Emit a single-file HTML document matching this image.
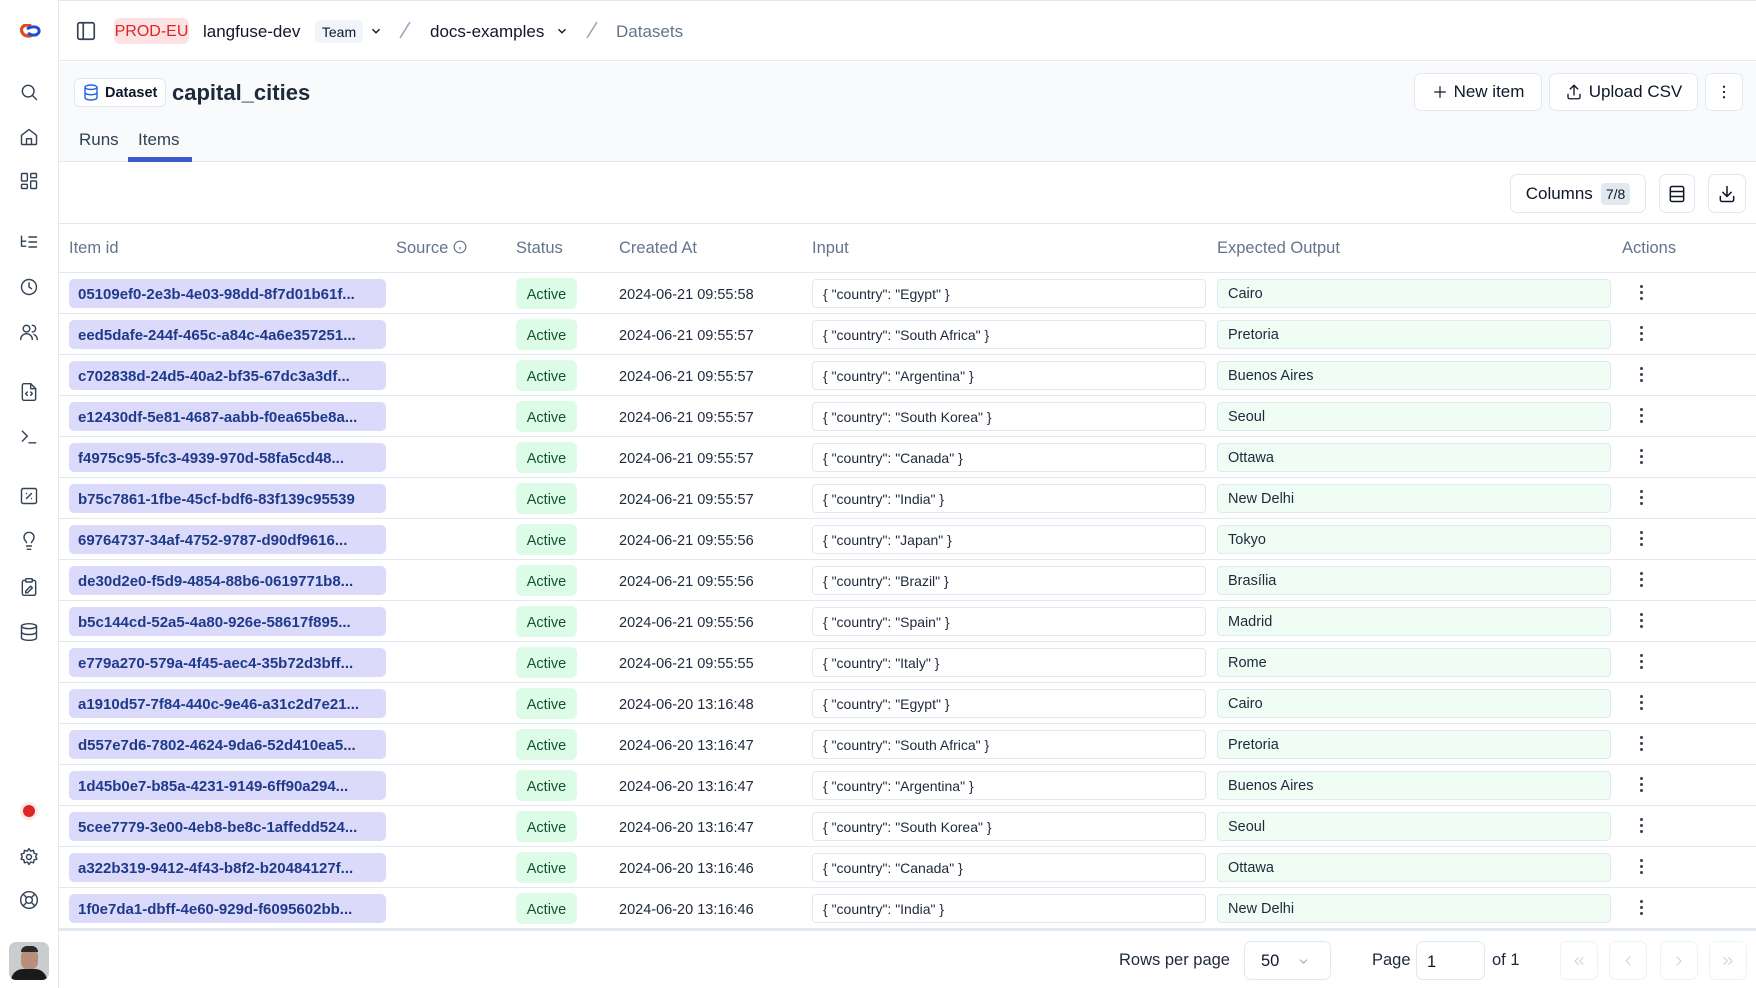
<!DOCTYPE html>
<html><head><meta charset="utf-8"><style>
*{box-sizing:border-box;margin:0;padding:0}
body{width:1756px;height:988px;overflow:hidden;background:#fff;font-family:"Liberation Sans",Arial,sans-serif;color:#0f172a;position:relative}
.a{position:absolute}
.side{left:0;top:0;width:59px;height:988px;border-right:1px solid #e2e8f0;background:#fff}
.ic{position:absolute;left:19px;width:20px;height:20px}
.ic svg{width:20px;height:20px;fill:none;stroke:#334155;stroke-width:1.7;stroke-linecap:round;stroke-linejoin:round}
.btn{position:absolute;border:1px solid #e2e8f0;border-radius:7px;background:#fff;display:flex;align-items:center;justify-content:center;font-size:17px;color:#0f172a}
.btn svg{fill:none;stroke:#0f172a;stroke-width:1.8;stroke-linecap:round;stroke-linejoin:round}
.th{position:absolute;top:239px;font-size:16.5px;color:#64748b}
.row{position:absolute;left:59px;width:1697px;height:41px;border-bottom:1px solid #e2e8f0}
.id{position:absolute;left:10px;top:6px;width:317px;height:29px;background:#dcdafa;border-radius:5px;color:#1e3a8a;font-size:15px;font-weight:bold;line-height:31px;padding-left:9px;white-space:nowrap;overflow:hidden}
.st{position:absolute;left:457px;top:5px;width:61px;height:31px;background:#dcfce7;border-radius:6px;color:#14532d;font-size:14.5px;text-align:center;line-height:34px}
.dt{position:absolute;left:560px;top:2px;line-height:41px;font-size:14.5px;color:#1e293b}
.in{position:absolute;left:753px;top:6px;width:394px;height:29px;border:1px solid #e2e8f0;border-radius:4px;font-size:14px;line-height:28px;padding-left:10px;color:#1e293b}
.out{position:absolute;left:1158px;top:6px;width:394px;height:29px;border:1px solid #e2e8f0;border-radius:4px;background:#f0fdf4;font-size:14.5px;line-height:28px;padding-left:10px;color:#1e293b}
.dots{position:absolute;left:1581px;top:12px;width:4px}
.dots i{display:block;width:3px;height:3px;background:#334155;border-radius:50%;margin-bottom:3px}
</style></head><body>
<div class="a side"></div>
<div class="a" style="left:19px;top:24px;width:22px;height:14px">
<svg width="22" height="14" viewBox="0 0 22 14"><path d="M12 2 C5 -1 1 4 3 8 C5 13 12 13 14 10" stroke="#e0481d" stroke-width="3.2" fill="none"/><path d="M8 5 C12 2 19 2 20 6 C21 11 14 13 9 9" stroke="#1d4ed8" stroke-width="3" fill="none"/></svg></div>
<div class="ic" style="top:82px"><svg viewBox="0 0 24 24"><circle cx="11" cy="11" r="7"/><path d="M21 21l-5-5"/></svg></div>
<div class="ic" style="top:127px"><svg viewBox="0 0 24 24"><path d="M3 10l9-7 9 7v10a1 1 0 0 1-1 1H4a1 1 0 0 1-1-1z"/><path d="M9 21v-7h6v7"/></svg></div>
<div class="ic" style="top:171px"><svg viewBox="0 0 24 24"><rect x="3" y="3" width="7" height="9" rx="1"/><rect x="14" y="3" width="7" height="5" rx="1"/><rect x="14" y="12" width="7" height="9" rx="1"/><rect x="3" y="16" width="7" height="5" rx="1"/></svg></div>
<div class="ic" style="top:232px"><svg viewBox="0 0 24 24"><path d="M3 5v12h5M3 11h5M12 6h9M12 12h9M12 18h9"/></svg></div>
<div class="ic" style="top:277px"><svg viewBox="0 0 24 24"><circle cx="12" cy="12" r="9"/><path d="M12 7v5l3 2"/></svg></div>
<div class="ic" style="top:322px"><svg viewBox="0 0 24 24"><circle cx="9" cy="8" r="4"/><path d="M2 21a7 7 0 0 1 14 0M16 4a4 4 0 0 1 0 8M22 21a7 7 0 0 0-4-6"/></svg></div>
<div class="ic" style="top:382px"><svg viewBox="0 0 24 24"><path d="M14 2H6a2 2 0 0 0-2 2v16a2 2 0 0 0 2 2h12a2 2 0 0 0 2-2V8z"/><path d="M14 2v6h6M10 12l-2 2 2 2M14 12l2 2-2 2"/></svg></div>
<div class="ic" style="top:427px"><svg viewBox="0 0 24 24"><path d="M4 17l6-6-6-6M12 19h8"/></svg></div>
<div class="ic" style="top:486px"><svg viewBox="0 0 24 24"><rect x="3" y="3" width="18" height="18" rx="2"/><path d="M15 9l-6 6M9 9h.01M15 15h.01"/></svg></div>
<div class="ic" style="top:531px"><svg viewBox="0 0 24 24"><path d="M15 14c.2-1 .7-1.7 1.5-2.5A6 6 0 1 0 7.5 11.5c.8.8 1.3 1.5 1.5 2.5M9 18h6M10 22h4"/></svg></div>
<div class="ic" style="top:577px"><svg viewBox="0 0 24 24"><rect x="8" y="2" width="8" height="4" rx="1"/><path d="M16 4h2a2 2 0 0 1 2 2v14a2 2 0 0 1-2 2H6a2 2 0 0 1-2-2V6a2 2 0 0 1 2-2h2M8 17l6-6 2 2-6 6H8z"/></svg></div>
<div class="ic" style="top:622px"><svg viewBox="0 0 24 24"><ellipse cx="12" cy="5" rx="9" ry="3"/><path d="M3 5v14c0 1.7 4 3 9 3s9-1.3 9-3V5M3 12c0 1.7 4 3 9 3s9-1.3 9-3"/></svg></div>
<div class="a" style="left:23px;top:805px;width:12px;height:12px;border-radius:50%;background:#dc2626;box-shadow:0 0 0 3px #fde8e8"></div>
<div class="ic" style="top:847px"><svg viewBox="0 0 24 24"><circle cx="12" cy="12" r="3"/><path d="M12 2l2 3 3.5-1 .5 3.5 3.5 1-1.5 3 1.5 3-3.5 1-.5 3.5-3.5-1-2 3-2-3-3.5 1-.5-3.5-3.5-1 1.5-3-1.5-3 3.5-1 .5-3.5 3.5 1z"/></svg></div>
<div class="ic" style="top:890px"><svg viewBox="0 0 24 24"><circle cx="12" cy="12" r="10"/><circle cx="12" cy="12" r="4"/><path d="M5 5l4 4M15 15l4 4M19 5l-4 4M9 15l-4 4"/></svg></div>
<div class="a" style="left:9px;top:942px;width:40px;height:38px;border-radius:7px;overflow:hidden;background:#c9cdd0">
<div class="a" style="left:12px;top:6px;width:17px;height:22px;border-radius:8px;background:#b88f7a"></div>
<div class="a" style="left:12px;top:4px;width:17px;height:6px;border-radius:6px 6px 0 0;background:#2a2a2a"></div>
<div class="a" style="left:2px;top:27px;width:36px;height:14px;border-radius:12px 12px 0 0;background:#1a1a1a"></div></div>

<div class="a" style="left:59px;top:0;width:1697px;height:61px;border-bottom:1px solid #e2e8f0;border-top:1px solid #e5e7eb"></div>
<div class="a" style="left:75px;top:20px"><svg width="22" height="22" viewBox="0 0 24 24" fill="none" stroke="#334155" stroke-width="1.8"><rect x="3" y="3" width="18" height="18" rx="2"/><path d="M9 3v18"/></svg></div>
<div class="a" style="left:114px;top:18px;width:75px;height:26px;background:#fde2e4;border-radius:6px;color:#dc2626;font-size:16px;line-height:28px;text-align:center">PROD-EU</div>
<div class="a" style="left:203px;top:22px;font-size:17px">langfuse-dev</div>
<div class="a" style="left:315px;top:20px;width:48px;height:23px;background:#f1f5f9;border-radius:5px;font-size:14px;line-height:25px;text-align:center">Team</div>
<div class="a" style="left:369px;top:24px"><svg width="14" height="14" viewBox="0 0 24 24" fill="none" stroke="#0f172a" stroke-width="2.4"><path d="M6 9l6 6 6-6"/></svg></div>
<div class="a" style="left:398px;top:20px"><svg width="14" height="20" viewBox="0 0 14 20"><path d="M12 2L2 18" stroke="#94a3b8" stroke-width="1.5"/></svg></div>
<div class="a" style="left:430px;top:22px;font-size:17px">docs-examples</div>
<div class="a" style="left:555px;top:24px"><svg width="14" height="14" viewBox="0 0 24 24" fill="none" stroke="#0f172a" stroke-width="2.4"><path d="M6 9l6 6 6-6"/></svg></div>
<div class="a" style="left:585px;top:20px"><svg width="14" height="20" viewBox="0 0 14 20"><path d="M12 2L2 18" stroke="#94a3b8" stroke-width="1.5"/></svg></div>
<div class="a" style="left:616px;top:22px;font-size:17px;color:#64748b">Datasets</div>

<div class="a" style="left:59px;top:62px;width:1697px;height:100px;background:#f8fafc;border-bottom:1px solid #e2e8f0"></div>
<div class="a" style="left:74px;top:78px;width:92px;height:29px;border:1px solid #e2e8f0;border-radius:6px;background:#fff"></div>
<div class="a" style="left:82px;top:83px"><svg width="18" height="19" viewBox="0 0 24 24" fill="none" stroke="#2563eb" stroke-width="1.9"><ellipse cx="12" cy="5" rx="8" ry="3"/><path d="M4 5v14c0 1.7 3.6 3 8 3s8-1.3 8-3V5M4 12c0 1.7 3.6 3 8 3s8-1.3 8-3"/></svg></div>
<div class="a" style="left:105px;top:85px;font-size:14.5px;font-weight:bold">Dataset</div>
<div class="a" style="left:172px;top:80px;font-size:22px;font-weight:bold;color:#1e293b">capital_cities</div>
<div class="a" style="left:79px;top:130px;font-size:17px;color:#334155">Runs</div>
<div class="a" style="left:138px;top:130px;font-size:17px;color:#334155">Items</div>
<div class="a" style="left:128px;top:157px;width:64px;height:5px;background:#3b5bcd"></div>
<div class="btn" style="left:1414px;top:73px;width:128px;height:38px"><svg width="16" height="16" viewBox="0 0 24 24" style="margin-right:6px"><path d="M12 4v16M4 12h16"/></svg>New item</div>
<div class="btn" style="left:1549px;top:73px;width:149px;height:38px"><svg width="18" height="18" viewBox="0 0 24 24" style="margin-right:6px"><path d="M4 15v4a2 2 0 0 0 2 2h12a2 2 0 0 0 2-2v-4M12 3v13M7 8l5-5 5 5"/></svg>Upload CSV</div>
<div class="btn" style="left:1705px;top:73px;width:38px;height:38px"><svg width="18" height="18" viewBox="0 0 24 24" style="stroke-width:3"><path d="M12 5h.01M12 12h.01M12 19h.01"/></svg></div>

<div class="btn" style="left:1510px;top:174px;width:136px;height:39px">Columns<span style="margin-left:8px;background:#e2e8f0;border-radius:4px;font-size:14px;padding:3px 5px">7/8</span></div>
<div class="btn" style="left:1659px;top:174px;width:36px;height:39px"><svg width="20" height="20" viewBox="0 0 24 24"><rect x="4" y="3" width="16" height="18" rx="2"/><path d="M4 9h16M4 15h16"/></svg></div>
<div class="btn" style="left:1708px;top:174px;width:38px;height:39px"><svg width="20" height="20" viewBox="0 0 24 24"><path d="M4 15v4a2 2 0 0 0 2 2h12a2 2 0 0 0 2-2v-4M12 3v12M7 10l5 5 5-5"/></svg></div>

<div class="a" style="left:59px;top:223px;width:1697px;height:50px;border-top:1px solid #e2e8f0;border-bottom:1px solid #e2e8f0"></div>
<div class="th" style="left:69px">Item id</div>
<div class="th" style="left:396px">Source <svg width="14" height="14" viewBox="0 0 24 24" fill="none" stroke="#64748b" stroke-width="2" style="vertical-align:-1px"><circle cx="12" cy="12" r="10"/><path d="M12 16v-4M12 8h.01"/></svg></div>
<div class="th" style="left:516px">Status</div>
<div class="th" style="left:619px">Created At</div>
<div class="th" style="left:812px">Input</div>
<div class="th" style="left:1217px">Expected Output</div>
<div class="th" style="left:1622px">Actions</div>

<div id="rows"></div>
<script>
var d=[["05109ef0-2e3b-4e03-98dd-8f7d01b61f...","2024-06-21 09:55:58","Egypt","Cairo"],
["eed5dafe-244f-465c-a84c-4a6e357251...","2024-06-21 09:55:57","South Africa","Pretoria"],
["c702838d-24d5-40a2-bf35-67dc3a3df...","2024-06-21 09:55:57","Argentina","Buenos Aires"],
["e12430df-5e81-4687-aabb-f0ea65be8a...","2024-06-21 09:55:57","South Korea","Seoul"],
["f4975c95-5fc3-4939-970d-58fa5cd48...","2024-06-21 09:55:57","Canada","Ottawa"],
["b75c7861-1fbe-45cf-bdf6-83f139c95539","2024-06-21 09:55:57","India","New Delhi"],
["69764737-34af-4752-9787-d90df9616...","2024-06-21 09:55:56","Japan","Tokyo"],
["de30d2e0-f5d9-4854-88b6-0619771b8...","2024-06-21 09:55:56","Brazil","Brasília"],
["b5c144cd-52a5-4a80-926e-58617f895...","2024-06-21 09:55:56","Spain","Madrid"],
["e779a270-579a-4f45-aec4-35b72d3bff...","2024-06-21 09:55:55","Italy","Rome"],
["a1910d57-7f84-440c-9e46-a31c2d7e21...","2024-06-20 13:16:48","Egypt","Cairo"],
["d557e7d6-7802-4624-9da6-52d410ea5...","2024-06-20 13:16:47","South Africa","Pretoria"],
["1d45b0e7-b85a-4231-9149-6ff90a294...","2024-06-20 13:16:47","Argentina","Buenos Aires"],
["5cee7779-3e00-4eb8-be8c-1affedd524...","2024-06-20 13:16:47","South Korea","Seoul"],
["a322b319-9412-4f43-b8f2-b20484127f...","2024-06-20 13:16:46","Canada","Ottawa"],
["1f0e7da1-dbff-4e60-929d-f6095602bb...","2024-06-20 13:16:46","India","New Delhi"]];
var h="";
d.forEach(function(r,i){h+='<div class="row" style="top:'+(273+i*41)+'px"><div class="id">'+r[0]+'</div><div class="st">Active</div><div class="dt">'+r[1]+'</div><div class="in">{ "country": "'+r[2]+'" }</div><div class="out">'+r[3]+'</div><div class="dots"><i></i><i></i><i></i></div></div>';});
document.getElementById("rows").innerHTML=h;
</script>
<div class="a" style="left:59px;top:929px;width:1697px;height:2px;background:#e2e8f0"></div>

<div class="a" style="left:1119px;top:951px;font-size:16.5px;color:#1e293b">Rows per page</div>
<div class="btn" style="left:1244px;top:941px;width:87px;height:39px;justify-content:flex-start;padding-left:16px;font-size:16.5px;padding-top:2px">50<svg width="13" height="13" viewBox="0 0 24 24" style="margin-left:18px;stroke:#94a3b8"><path d="M6 9l6 6 6-6"/></svg></div>
<div class="a" style="left:1372px;top:951px;font-size:16.5px;color:#1e293b">Page</div>
<div class="btn" style="left:1416px;top:941px;width:69px;height:39px;justify-content:flex-start;padding-left:10px;font-size:16.5px;padding-top:3px">1</div>
<div class="a" style="left:1492px;top:951px;font-size:16.5px;color:#1e293b">of 1</div>
<div class="btn" style="left:1560px;top:941px;width:38px;height:39px;border-color:#eef2f6"><svg width="16" height="16" viewBox="0 0 24 24" style="stroke:#cbd5e1"><path d="M11 17l-5-5 5-5M18 17l-5-5 5-5"/></svg></div>
<div class="btn" style="left:1609px;top:941px;width:38px;height:39px;border-color:#eef2f6"><svg width="16" height="16" viewBox="0 0 24 24" style="stroke:#cbd5e1"><path d="M15 18l-6-6 6-6"/></svg></div>
<div class="btn" style="left:1660px;top:941px;width:38px;height:39px;border-color:#eef2f6"><svg width="16" height="16" viewBox="0 0 24 24" style="stroke:#cbd5e1"><path d="M9 18l6-6-6-6"/></svg></div>
<div class="btn" style="left:1709px;top:941px;width:38px;height:39px;border-color:#eef2f6"><svg width="16" height="16" viewBox="0 0 24 24" style="stroke:#cbd5e1"><path d="M13 17l5-5-5-5M6 17l5-5-5-5"/></svg></div>
</body></html>
